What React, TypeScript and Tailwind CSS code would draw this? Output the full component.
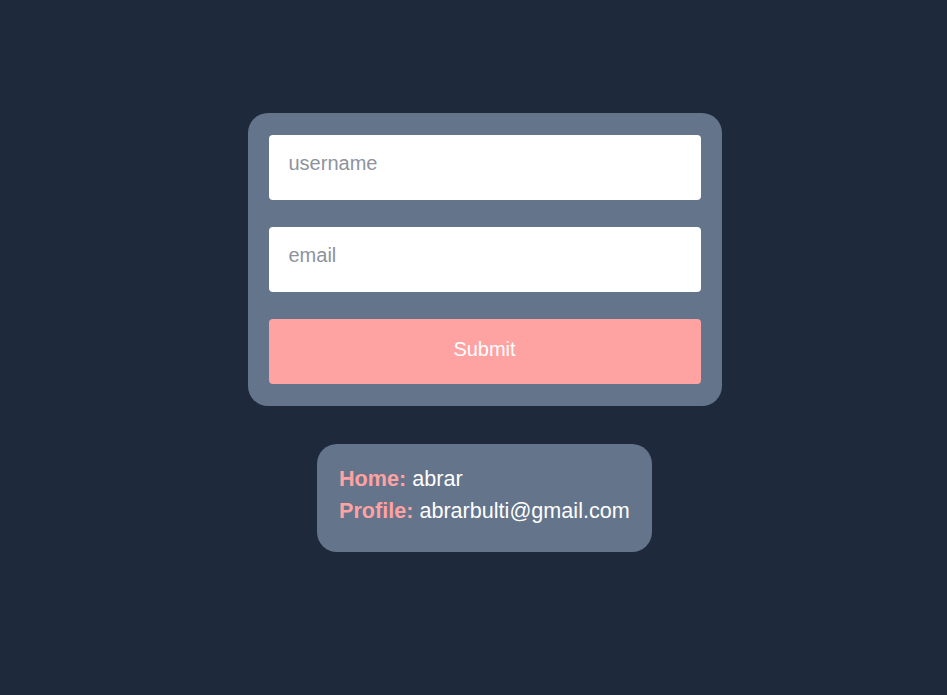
import React from "react";

export default function App() {
  return (
    <div
      className="min-h-screen w-full bg-[#1e293b] flex flex-col items-center pt-[113px] pl-[22px]"
      style={{ fontFamily: '"Liberation Sans", Arial, sans-serif' }}
    >
      <form
        className="w-[474px] bg-[#64748b] rounded-[20px] px-[21px] py-[22px] flex flex-col gap-[27px]"
        onSubmit={(e) => e.preventDefault()}
      >
        <input
          type="text"
          placeholder="username"
          className="h-[65px] w-full bg-white rounded-[4px] pl-[20px] pr-[20px] pb-[9px] text-[20px] text-gray-800 placeholder:text-[#8d939d] outline-none"
        />
        <input
          type="email"
          placeholder="email"
          className="h-[65px] w-full bg-white rounded-[4px] pl-[20px] pr-[20px] pb-[9px] text-[20px] text-gray-800 placeholder:text-[#8d939d] outline-none"
        />
        <button
          type="submit"
          className="h-[65px] w-full bg-[#ffa2a2] rounded-[4px] text-white text-[20px] pb-[5px]"
        >
          Submit
        </button>
      </form>
      <div className="mt-[38px] w-[335px] bg-[#64748b] rounded-[20px] pl-[22px] pt-[19px] pb-[25px] text-[21.6px] leading-[32px] text-white">
        <p>
          <span className="font-bold text-[#ffa2a2]">Home:</span> abrar
        </p>
        <p>
          <span className="font-bold text-[#ffa2a2]">Profile:</span> abrarbulti@gmail.com
        </p>
      </div>
    </div>
  );
}
